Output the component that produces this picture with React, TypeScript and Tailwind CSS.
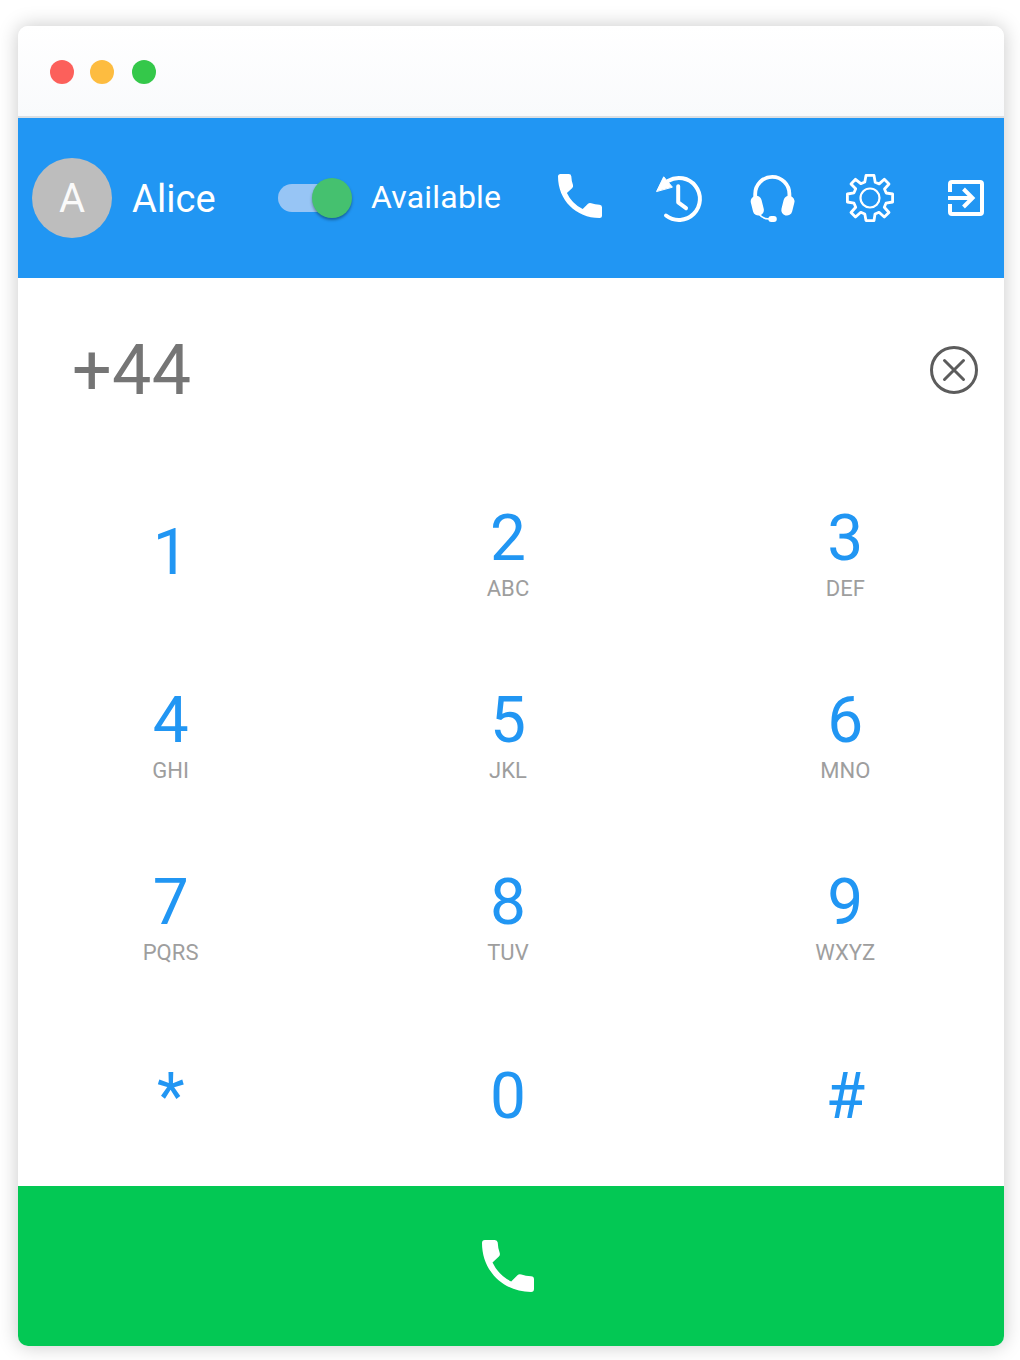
import React from "react";

const keys: [string, string][] = [
  ["1", ""], ["2", "ABC"], ["3", "DEF"],
  ["4", "GHI"], ["5", "JKL"], ["6", "MNO"],
  ["7", "PQRS"], ["8", "TUV"], ["9", "WXYZ"],
  ["*", ""], ["0", ""], ["#", ""],
];

function Phone({ className }: { className: string }) {
  return (
    <svg className={className} viewBox="0 0 44 44" fill="#fff">
      <path d="M2.5 0H10.800Q13 0 13.300 2.200Q13.500 7 15 11Q15.500 12.700 14.300 14L8.900 19Q14 29.800 24.700 35.100L30 29.800Q31.300 28.500 33.300 29.200Q37 30.500 41.500 30.700Q44 30.900 44 33.200V41.500Q44 44 41.500 44C18 44 0 26 0 2.500Q0 0 2.500 0Z" />
    </svg>
  );
}

function History() {
  return (
    <svg className="h-[50px] w-[50px]" viewBox="0 0 50 50" fill="none" stroke="#fff" strokeWidth="4" strokeLinecap="round" strokeLinejoin="round">
      <path d="M13 8A21 21 0 1 1 11 42.500" />
      <path d="M23.200 13.300V29.300L31 35.200" />
      <path d="M1.700 18.200L8.700 3.800L17.200 13.900Z" fill="#fff" strokeWidth="1" />
    </svg>
  );
}

function Headset() {
  return (
    <svg className="h-[48px] w-[46px]" viewBox="0 0 46 48" fill="#fff">
      <path d="M5.200 24V19A17.100 17.100 0 0 1 39.400 19V24" fill="none" stroke="#fff" strokeWidth="3.800" />
      <rect x="1.800" y="20.700" width="11" height="20" rx="5.500" transform="rotate(-14 7.300 30.700)" />
      <rect x="32.400" y="20.700" width="11" height="20" rx="5.500" transform="rotate(14 37.900 30.700)" />
      <path d="M9.500 39.500Q12.500 44 20 44" fill="none" stroke="#fff" strokeWidth="1.500" />
      <rect x="18.300" y="41" width="8.500" height="6" rx="3" />
    </svg>
  );
}

function Gear() {
  return (
    <svg className="size-12" viewBox="0 0 48 48" fill="none" stroke="#fff" strokeWidth="2.800" strokeLinejoin="round">
      <path d="M20 1.400H28L29.200 8.200L33.200 9.900L38.300 5.300L43 10L38.500 15L40.200 19L46.600 20V28L40 29.200L38.300 33.200L43 38.500L38.300 43L33 38.300L29 40L28 46.600H20L18.800 40L14.800 38.300L9.500 43L5 38.500L9.700 33.200L8 29.200L1.400 28V20L8 18.800L9.700 14.800L5 10L9.500 5.300L14.800 9.700L18.800 8Z" />
      <circle cx="24" cy="24" r="9.500" strokeWidth="2.200" />
    </svg>
  );
}

function Exit() {
  return (
    <svg className="size-9" viewBox="0 0 36 36" fill="none" stroke="#fff" strokeWidth="4">
      <path d="M2 12V4Q2 2 4 2H32Q34 2 34 4V32Q34 34 32 34H4Q2 34 2 32V24" />
      <path d="M0 18H24M15.500 9L24.500 18L15.500 27" />
    </svg>
  );
}

export default function App() {
  return (
    <div className="h-[1360px] w-[1020px] overflow-hidden bg-white pl-[18px] pt-[26px] font-['Roboto',sans-serif]">
      <div className="flex h-[1320px] w-[986px] flex-col overflow-hidden rounded-[10px] bg-white shadow-[0_0_20px_rgba(0,0,0,0.22)]">
        <div className="flex h-[92px] shrink-0 items-center border-b-2 border-[#dcdfe3] bg-linear-to-b from-white to-[#f9fafc] pl-8 pt-0.5">
          <span className="size-6 rounded-full bg-[#fc605b]" />
          <span className="ml-4 size-6 rounded-full bg-[#fdbc40]" />
          <span className="ml-[18px] size-6 rounded-full bg-[#34c84a]" />
        </div>
        <header className="flex h-40 shrink-0 items-center bg-[#2196f3] pl-3.5 text-white">
          <div className="flex size-20 items-center justify-center rounded-full bg-[#bdbdbd] pt-0.5 text-[40px] text-[#fafafa]">A</div>
          <div className="ml-5 w-[146px] pt-0.5 text-[38px] tracking-[0.1px]">Alice</div>
          <div className="flex h-7 w-[68px] items-center rounded-full bg-[#97c5f5]">
            <span className="ml-[34px] size-10 shrink-0 rounded-full bg-[#45c16f] shadow-[0_2px_3px_rgba(0,0,0,0.35)]" />
          </div>
          <div className="ml-[25px] w-[187px] pb-0.5 text-[32px] tracking-[0.2px]">Available</div>
          <div className="pb-1"><Phone className="size-11" /></div>
          <div className="ml-[53px]"><History /></div>
          <div className="ml-[45px] pt-0.5"><Headset /></div>
          <div className="ml-[50px]"><Gear /></div>
          <div className="ml-[54px]"><Exit /></div>
        </header>
        <div className="flex h-[184px] shrink-0 items-center justify-between pl-[54px] pr-[26px]">
          <div className="text-[70px] tracking-[0.3px] text-[#757575]">+44</div>
          <svg className="size-12" viewBox="0 0 48 48" fill="none" stroke="#5c5c5c" strokeWidth="3" strokeLinecap="round"><circle cx="24" cy="24" r="22.500" /><path d="M14.500 14.500L33.500 33.500M33.500 14.500L14.500 33.500" /></svg>
        </div>
        <div className="-ml-4 grid h-[724px] w-[1012px] shrink-0 grid-cols-3 grid-rows-[182px_182px_182px_179px]">
          {keys.map(([k, l]) => (
            <button key={k} className="flex flex-col items-center justify-center pb-0.5">
              <span className="text-[64px] leading-[73px] text-[#2196f3]">{k}</span>
              {l && <span className="mt-px text-[22px] leading-[26px] tracking-[0.1px] text-[#9e9e9e]">{l}</span>}
            </button>
          ))}
        </div>
        <button className="flex h-40 shrink-0 items-center justify-center bg-[#03c854] pr-1.5"><Phone className="size-[52px]" /></button>
      </div>
    </div>
  );
}
